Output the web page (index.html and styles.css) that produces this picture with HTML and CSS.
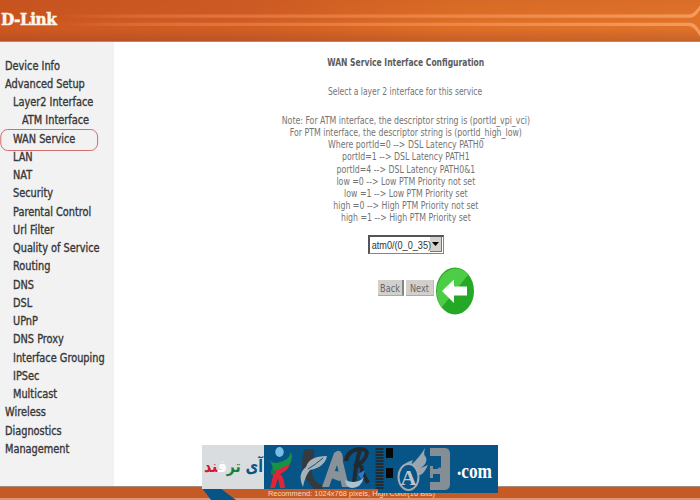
FILE: index.html
```html
<!DOCTYPE html>
<html lang="en">
<head>
<meta charset="utf-8">
<title>WAN Service Interface Configuration</title>
<link rel="stylesheet" href="styles.css">
</head>
<body>
<header class="header">
  <svg class="rails" viewBox="0 0 700 42" aria-hidden="true">
    <defs><linearGradient id="rail"><stop offset="0" stop-color="#f29a60" stop-opacity="0"/><stop offset=".25" stop-color="#e87c45" stop-opacity=".7"/><stop offset="1" stop-color="#f69b5d"/></linearGradient></defs>
    <path d="M58 14.5H689Q694 14.5 701 4V8Q696 17.8 690 17.8H58ZM58 22.8H690Q696 22.8 701 33V38Q694 26 689 26H58Z" fill="url(#rail)"/>
  </svg>
  <span class="logo">D-Link</span>
</header>
<div class="body">
  <nav class="sidebar">
    <a>Device Info</a>
    <a>Advanced Setup</a>
    <a class="sub">Layer2 Interface</a>
    <a class="deep">ATM Interface</a>
    <a class="sub current">WAN Service</a>
    <a class="sub">LAN</a>
    <a class="sub">NAT</a>
    <a class="sub">Security</a>
    <a class="sub">Parental Control</a>
    <a class="sub">Url Filter</a>
    <a class="sub">Quality of Service</a>
    <a class="sub">Routing</a>
    <a class="sub">DNS</a>
    <a class="sub">DSL</a>
    <a class="sub">UPnP</a>
    <a class="sub">DNS Proxy</a>
    <a class="sub">Interface Grouping</a>
    <a class="sub">IPSec</a>
    <a class="sub">Multicast</a>
    <a>Wireless</a>
    <a>Diagnostics</a>
    <a>Management</a>
  </nav>
  <main class="content">
    <h1>WAN Service Interface Configuration</h1>
    <p class="intro">Select a layer 2 interface for this service</p>
    <p class="note">Note: For ATM interface, the descriptor string is (portId_vpi_vci)<br>For PTM interface, the descriptor string is (portId_high_low)<br>Where portId=0 --&gt; DSL Latency PATH0<br>portId=1 --&gt; DSL Latency PATH1<br>portId=4 --&gt; DSL Latency PATH0&amp;1<br>low =0 --&gt; Low PTM Priority not set<br>low =1 --&gt; Low PTM Priority set<br>high =0 --&gt; High PTM Priority not set<br>high =1 --&gt; High PTM Priority set</p>
    <div class="select"><span class="value">atm0/(0_0_35)</span><span class="drop"><svg width="7" height="4" viewBox="0 0 7 4"><path d="M0 0H7L3.5 4Z"/></svg></span></div>
    <div class="actions">
      <span class="button"><span>Back</span></span>
      <span class="button next"><span>Next</span></span>
      <svg class="arrow" width="38" height="48" viewBox="0 0 38 48" aria-hidden="true">
        <ellipse cx="19" cy="24" rx="19" ry="23.5" fill="#25a825"/>
        <path d="M5.600 40.600A19 23.500 0 0 1 32.400 7.400Z" fill="#4dcc45"/>
        <path d="M6 24L18 12.500V19.500H31V28.500H18V36Z" fill="#fff"/>
      </svg>
    </div>
  </main>
</div>
<footer class="footer"><span>Recommend: 1024x768 pixels, High Color(16 Bits)</span></footer>
<div class="watermark">
  <svg width="296" height="55" viewBox="0 0 296 55">
    <path d="M0 43H18L34 55H9Z" fill="#075486"/>
    <path d="M0 0H62V44H0Z" fill="#dadde0"/>
    <path d="M62 0H296V48H176V44H62Z" fill="#075486"/>
    <text class="persian" x="61" y="27" textLength="59" lengthAdjust="spacingAndGlyphs"><tspan fill="#075486">آی </tspan><tspan fill="#168044">تر</tspan><tspan fill="#fff">ف</tspan><tspan fill="#d7192e">ند</tspan></text>
    <ellipse cx="77.500" cy="7" rx="4.200" ry="5" fill="#79bfe5"/>
    <path d="M67 14Q71 20 78 17Q87 15 89 7Q92 16 85 22Q76 25 75 30L70 27Q72 21 67 14Z" fill="#159447"/>
    <path d="M88 19Q86 26 78 29Q82 31 83 43H78L76 33L73 43H68L71 31Q69 27 75 25Z" fill="#df2635"/>
    <path d="M69 25H74V29H69Z" fill="#168044"/>
    <path d="M103 4H112V14Q107 26 113 36L121 41V44H112Q94 26 103 4Z" fill="#343a40"/>
    <path d="M104 22Q107 11 125 11Q123 22 108 25Q103 31 101 42Q95 29 104 22Z" fill="#a8b1b8"/>
    <path d="M106 24Q113 20 121 13" fill="none" stroke="#075486"/>
    <path d="M120 42L132 8Q141 1 141 17L147 42H140L135 20L127 42Z" fill="#899299"/>
    <path d="M124 31Q135 20 144 33L137 36Z" fill="#899299"/>
    <g fill="none" stroke="#222a30" stroke-width="4">
      <path d="M144 16Q145 6 157 4Q171 4 160 17L152 21Q161 18 160 27L166 38"/>
      <path d="M158 5Q154 17 152 38"/>
    </g>
    <path d="M143 35Q145 47 157 41Q161 37 162 32Q155 40 143 35Z" fill="#abc2cf"/>
    <path d="M156 29L163 25L160 35Z" fill="#2e76c7"/>
    <path d="M177.500 3V44" stroke="#242a2e" stroke-width="8" stroke-dasharray="2 1"/>
    <path d="M184 3H191V13H184ZM184 23H191V33H184Z" fill="#050708"/>
    <path d="M197 29Q199 18 211 15L209 20Q217 13 223 3Q221 11 224 12Q226 18 219 23L226 20Q220 33 216 29Z" fill="#98a4ae"/>
    <ellipse cx="206.500" cy="32" rx="10" ry="13" fill="#075486" stroke="#a1abb3" stroke-width="2"/>
    <text class="letter" x="206.500" y="40" text-anchor="middle" textLength="16" lengthAdjust="spacingAndGlyphs">A</text>
    <path d="M228 3H243Q248 3 248 9V39Q248 45 242 45H228V37H238V29H231V33H228V21H231V24H239V11H228Z" fill="#858e95"/>
    <circle cx="238" cy="25" r="2.500" fill="#858e95"/>
    <text class="com" x="255" y="33" textLength="35" lengthAdjust="spacingAndGlyphs"><tspan dy="-3">.</tspan><tspan dy="3">com</tspan></text>
  </svg>
</div>
</body>
</html>
```

FILE: styles.css
```css
* { box-sizing: border-box; }
body {
  margin: 0;
  width: 700px;
  height: 500px;
  display: flex;
  flex-direction: column;
  position: relative;
  overflow: hidden;
  background: #fff;
  font-family: "DejaVu Sans Condensed", "DejaVu Sans", sans-serif;
}
.header {
  height: 42px;
  flex: none;
  position: relative;
  background: linear-gradient(180deg, #b4532822 0, #ef792200 35%, #ef792220 70%, #9f4b2d66 100%), linear-gradient(90deg, #c9531f 0, #ce5a23 35%, #dc6d25 65%, #df7229 100%);
  border-bottom: 1px solid #c5835f;
}
.rails { position: absolute; inset: 0; width: 700px; height: 42px; }
.logo {
  position: absolute;
  left: 1px;
  top: 8px;
  color: #fff5ed;
  font: bold 17.500px/22px "DejaVu Serif Condensed", "DejaVu Serif", serif;
  letter-spacing: -.5px;
  -webkit-text-stroke: .5px #fff5ed;
  transform: scaleX(.97);
  transform-origin: left;
}
.body { display: flex; height: 444px; }
.sidebar {
  width: 114px;
  background: #f2f2f2;
  padding-top: 14.500px;
  color: #383838;
  font-size: 12px;
  line-height: 18.250px;
  -webkit-text-stroke: .35px #383838;
}
.sidebar a {
  display: block;
  height: 18.250px;
  margin-left: 5px;
  width: 125px;
  white-space: nowrap;
  transform: scaleX(.905);
  transform-origin: left;
}
.sidebar .sub { margin-left: 13px; }
.sidebar .deep { margin-left: 22px; }
.sidebar .current { position: relative; }
.current::before {
  content: "";
  position: absolute;
  left: -14px;
  top: -1px;
  width: 106px;
  height: 20px;
  border: 1px solid #cf6666;
  border-radius: 8px;
}
.content {
  width: 583px;
  display: flex;
  flex-direction: column;
  align-items: center;
  color: #747474;
  font-size: 10.300px;
  line-height: 12.150px;
  text-align: center;
}
h1, .intro, .note { margin: 0; white-space: nowrap; }
h1 { margin-top: 14px; font-size: 10.300px; line-height: 12px; color: #5c5c5c; transform: scaleX(.82); }
.intro { margin-top: 17px; transform: scaleX(.82); }
.note { margin-top: 16.800px; transform: scaleX(.845); }
.select {
  margin-top: 11.700px;
  width: 76px;
  height: 19px;
  display: flex;
  border: 1px solid #858585;
  border-top: 2px solid #555;
  border-left: 2px solid #555;
  color: #333;
  font: 11px/17px "Liberation Sans", sans-serif;
}
.value { width: 61px; padding-left: 2px; text-align: left; white-space: nowrap; transform: scaleX(.83); transform-origin: left; flex: none; }
.drop {
  width: 12px;
  height: 15px;
  margin-left: -1px;
  display: flex;
  align-items: center;
  justify-content: center;
  background: #d5d2cc;
  border-right: 1px solid #777;
  border-bottom: 1px solid #777;
}
.actions { display: flex; align-items: center; margin: 12.500px 0 0 40px; }
.button {
  width: 26px;
  height: 16px;
  margin: -6px 2px 0 0;
  background: #d2d0cd;
  border-right: 2px solid #868686;
  border-bottom: 1px solid #aaa;
  color: #666;
  line-height: 16px;
}
.button span { display: block; transform: scaleX(.88); }
.next { width: 28px; border-right: 1px solid #bbb; }
.arrow { flex: none; }
.footer {
  height: 14px;
  background: #c65a24;
  border-top: 1px solid #a98778;
  border-bottom: 2px solid #dc9673;
  color: #f7d6c2;
  font: 8px/14px "Liberation Sans", sans-serif;
}
.footer span { display: block; width: 180px; margin-left: 268px; white-space: nowrap; transform: scaleX(.93); transform-origin: left; }
.watermark { position: absolute; left: 202px; top: 445px; width: 296px; height: 55px; }
.watermark svg { display: block; overflow: visible; }
.persian { font: bold 17px "DejaVu Sans", sans-serif; direction: rtl; }
.letter { font: bold 22px "Liberation Serif", serif; fill: #c0c6ca; }
.com { font: bold 20px "Liberation Serif", serif; fill: #fff; }
```
